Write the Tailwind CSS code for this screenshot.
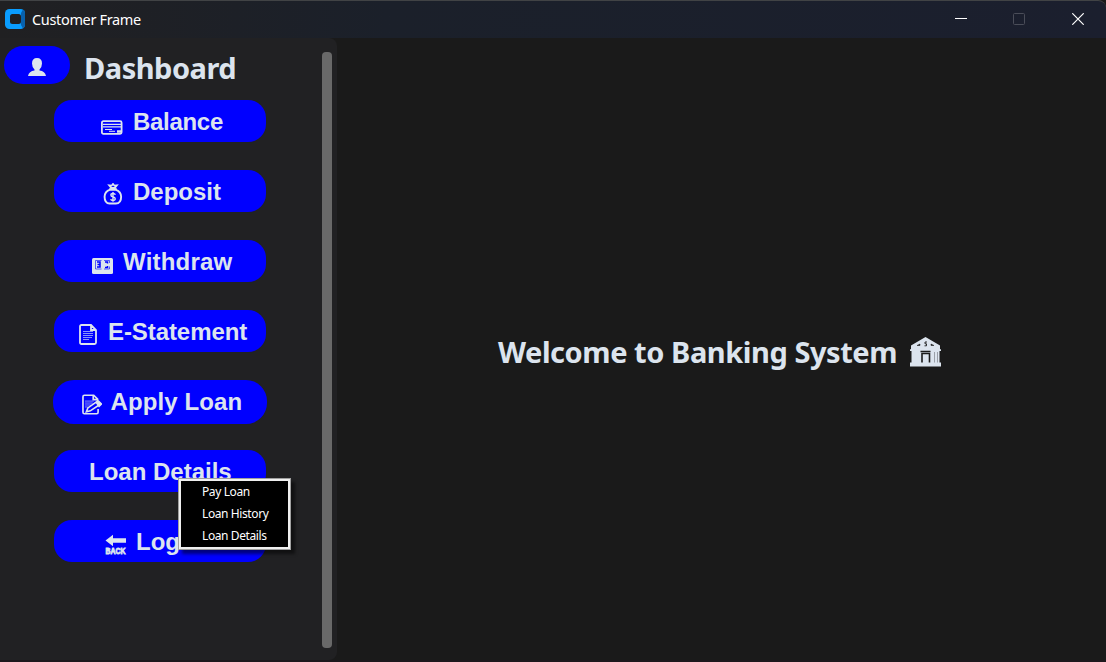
<!DOCTYPE html>
<html lang="en">
<head>
<meta charset="utf-8">
<title>Customer Frame</title>
<script src="https://cdn.jsdelivr.net/npm/@tailwindcss/browser@4"></script>
</head>
<body class="relative flex h-[662px] w-[1106px] flex-col overflow-hidden bg-[#1a1a1a] font-['Noto_Sans',sans-serif] text-[#dce4ee]">
<header class="flex h-[38px] shrink-0 items-center rounded-tr-lg border-t border-[#414345] bg-linear-to-r from-[#202022] via-[#1b202a] via-35% to-[#1b1f2e] pb-[2px] pl-[5px] text-white">
  <svg class="size-5 shrink-0" viewBox="0 0 20 20"><rect width="20" height="20" rx="4.500" fill="#0a9dff"/><path d="M16 4l2-3.500q2 1 2 3.500v12q0 2.500-2 3.500l-2-3.500z" fill="#0861ac"/><rect x="5" y="5" width="11" height="10" rx="2.500" fill="#202022"/></svg>
  <h1 class="ml-[7px] w-28 whitespace-nowrap text-[14.5px] leading-5 tracking-[-0.34px]">Customer Frame</h1>
  <div class="mr-[22px] ml-auto flex items-center">
    <svg class="mr-[46px] h-3 w-3" viewBox="0 0 12 12"><path d="M0 5.500h12" stroke="#fff"/></svg>
    <svg class="mr-[47px] h-3 w-3" viewBox="0 0 12 12"><rect x=".5" y=".5" width="11" height="11" rx="1" fill="none" stroke="#4a4d58"/></svg>
    <svg class="h-3 w-3" viewBox="0 0 12 12"><path d="M.3.3l11.4 11.4M11.7.3L.3 11.7" stroke="#fff" stroke-width="1.2"/></svg>
  </div>
</header>
<div class="flex h-[622px] shrink-0">
  <aside class="flex h-[622px] w-[337px] shrink-0 rounded-r-lg bg-[#212123]">
    <div class="w-[322px]">
      <div class="flex h-[62px] pt-[8px] pl-[4px]">
        <button class="flex h-[38px] w-[66px] shrink-0 items-center justify-center rounded-[19px] bg-[#0000ff]">
          <svg class="mt-1 h-[18px] w-[18px]" viewBox="0 0 18 18" fill="#dce4ee"><path d="M4 5.500Q4 0 9 0t5 5.500Q14 9 11.500 11.500V12.500Q17 13 18 18H0q1-5 6.500-5.500v-1Q4 9 4 5.500z"/></svg>
        </button>
        <h2 class="mt-[2px] ml-[14px] whitespace-nowrap text-[29px] leading-[40px] font-bold tracking-[-0.48px]">Dashboard</h2>
      </div>
      <nav class="flex flex-col gap-[28px] pl-[54px] font-['Liberation_Sans',sans-serif] text-[24px] leading-[44px] font-bold whitespace-nowrap">
        <button class="flex h-[42px] w-[212px] rounded-[18px] bg-[#0000ff] pl-[47px]">
          <svg class="mt-[20px] mr-[10px] h-[15px] w-[22px] shrink-0" viewBox="0 0 22 15" fill="none" stroke="#dce4ee"><rect x=".9" y="1.200" width="19.700" height="12.600" rx="1.500" stroke-width="1.800"/><path d="M2 4.300h18M2 6.800h18" stroke-width="1.300"/><path d="M4 9.500h7M8 11.300h6"/><path d="M16 11.500h4" stroke-width="2.500"/></svg>
          <span class="tracking-[-0.3px]">Balance</span>
        </button>
        <button class="flex h-[42px] w-[212px] rounded-[18px] bg-[#0000ff] pl-[49px]">
          <svg class="mt-[13px] mr-[10px] h-[22px] w-[20px] shrink-0" viewBox="0 0 20 23" fill="none" stroke="#dce4ee"><path d="M7 7Q1.200 9 1.200 14.500q0 7 5.300 7h6.500q5.500 0 5.500-7 0-5.500-6-7.500z" stroke-width="2"/><path d="M8 5L6 2.500l2.500.3L10 1l1.500 1.800 2.500-.3-2 2.500zM6 6.500h8" stroke-width="1.800"/><path d="M12.500 12.200Q12 11 10 11q-2.200 0-2.200 1.600T10 14.500t2.300 2-2.300 1.700q-2 0-2.500-1.200M10 9.500v10.200" stroke-width="1.500"/></svg>
          <span>Deposit</span>
        </button>
        <button class="flex h-[42px] w-[212px] rounded-[18px] bg-[#0000ff] pl-[38px]">
          <svg class="mt-[17px] mr-[10px] h-[17px] w-[21px] shrink-0" viewBox="0 0 21 17"><rect y="1" width="21" height="16" rx="1.500" fill="#dce4ee"/><path d="M9.500 3.500H3.500v8.500h6M12 3.500h5.500V6M12 12h5.500V9.500" fill="none" stroke="#0000ff" stroke-opacity=".6"/><path d="M5 5h3v2.500H5.500M8 7.500V10H5M13 5h2.500v1.500M13 10.500h2.500V9" fill="none" stroke="#0000ff" stroke-width="1.500"/></svg>
          <span class="tracking-[0.2px]">Withdraw</span>
        </button>
        <button class="flex h-[42px] w-[212px] rounded-[18px] bg-[#0000ff] pl-[25px]">
          <svg class="mt-[14px] mr-[11px] h-[21px] w-[18px] shrink-0" viewBox="0 0 18 21" fill="none" stroke="#dce4ee"><path d="M2.500 1H12l5 5v12.500q0 1.500-1.500 1.500h-13Q1 20 1 18.500v-16Q1 1 2.500 1zM12 1v5h5" stroke-width="1.800"/><path d="M4 7.500h10M4 9.500h10M4 11.500h10M4 13.500h9M4 15.500h6" stroke="#8991fa"/></svg>
          <span class="tracking-[-0.08px]">E-Statement</span>
        </button>
        <button class="-ml-px flex h-[44px] w-[214px] rounded-[21px] bg-[#0000ff] pl-[28.5px]">
          <svg class="mt-[14px] mr-[8.5px] h-[21px] w-[20.5px] shrink-0" viewBox="0 0 21 21" fill="none" stroke="#dce4ee"><path d="M16.500 15v3.500q0 1.500-1.500 1.500H2.500Q1 20 1 18.500v-16Q1 1 2.500 1H12l4 4V7M11.500 1v4.500H16" stroke-width="1.700"/><path d="M3 7h9M3 9h8M3 11h6M3 13h3" stroke="#8991fa"/><path d="M4.500 18l1.500-4L16 7l3 3L8.500 17z" fill="#0000ff" stroke-width="1.700"/><path d="M14.500 8.500L17 7l3 3-2.500 2.500z" fill="#dce4ee" stroke-width="1.400"/></svg>
          <span class="tracking-[0.12px]">Apply Loan</span>
        </button>
        <button class="-mt-[2px] flex h-[42px] w-[212px] rounded-[18px] bg-[#0000ff] pl-[35px]"><span>Loan Details</span></button>
        <button class="flex h-[42px] w-[212px] rounded-[18px] bg-[#0000ff] pl-[51px]">
          <svg class="mt-[14px] mr-[10px] h-[21px] w-[21px] shrink-0 overflow-visible" viewBox="0 0 21 21" fill="#dce4ee"><path d="M.5 6.500L8 .8v3.400H21v4.600H8v3.400z"/><text x="0.500" y="19.500" font-family="Liberation Sans" font-size="8.500" font-weight="700" textLength="20" lengthAdjust="spacingAndGlyphs" stroke="#dce4ee" stroke-width=".8">BACK</text></svg>
          <span>Logout</span>
        </button>
      </nav>
    </div>
    <div class="mt-[14px] h-[596px] w-[10px] rounded-[4px] bg-[#696969]"></div>
  </aside>
  <main class="flex flex-1 pt-[294px] pl-[161px]">
    <h2 class="w-[412px] shrink-0 text-[29px] leading-[40px] font-bold tracking-[-0.44px] whitespace-nowrap">Welcome to Banking System</h2>
    <svg class="mt-[5px] h-[30px] w-[31px] shrink-0" viewBox="0 0 31 30" fill="#dce4ee"><path d="M15.500 0L30 8.500v3.500l1 .5v1.500h-1.500v11.500H31V29.500H0V25.500h1.500V14H0v-1.500l1-.5V8.500z"/><path d="M10.500 14.500h10" stroke="#1a1a1a" stroke-width="1.500"/><path d="M12 25.500V16.500h7.500v9" fill="none" stroke="#1a1a1a" stroke-width="1.600"/><path d="M7 8.500l3-1.500v1.500zM24 8.500l-3-1.500v1.500z" fill="#1a1a1a" stroke="#1a1a1a" stroke-width=".5"/><path d="M17 5h-2v1.800h1.500v2H14.500" fill="none" stroke="#1a1a1a" stroke-width=".9"/><path d="M24.500 15v10.500M27.500 15v10.500" stroke="#7c8188" stroke-width=".7"/></svg>
  </main>
</div>
<div class="h-[2px] bg-[#1d181d]"></div>
<div class="absolute top-[478px] left-[178px] h-[72px] w-[113px] border border-[#a0a0a0] bg-[#f0f0f0] p-[2px] shadow-[4px_4px_3px_rgba(0,0,0,0.5)]">
  <ul class="h-[66px] bg-black pl-[21px] text-[12px] leading-[22px] tracking-[-0.4px] whitespace-nowrap text-white">
    <li>Pay Loan</li><li>Loan History</li><li>Loan Details</li>
  </ul>
</div>
</body>
</html>
